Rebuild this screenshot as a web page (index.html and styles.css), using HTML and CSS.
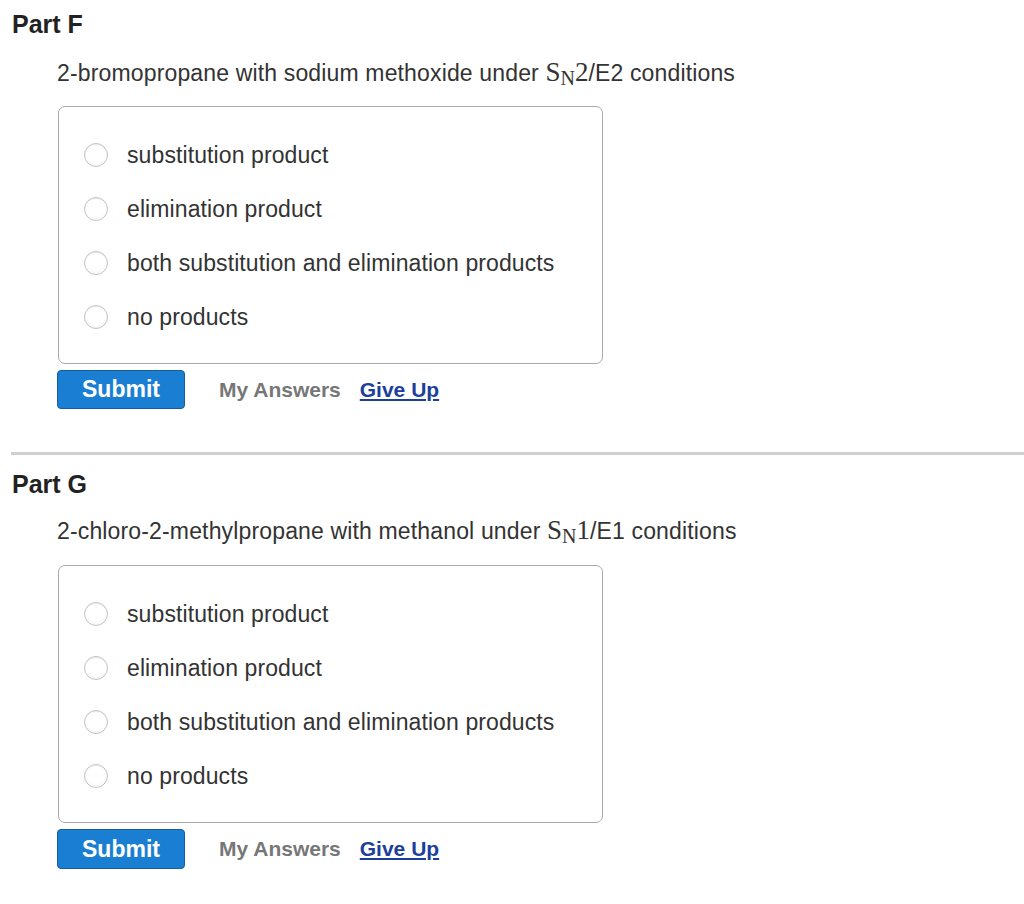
FILE: index.html
```html
<!DOCTYPE html>
<html lang="en">
<head>
    <meta charset="UTF-8">
    <meta name="viewport" content="width=1024">
    <title>Parts F and G</title>
    <link rel="stylesheet" href="styles.css">
</head>
<body>
    <div class="part">
        <h2 class="part-title">Part F</h2>
        <p class="question">2-bromopropane with sodium methoxide under <span class="math">S<sub>N</sub>2</span>/E2 conditions</p>
        <div class="choices">
            <label class="choice"><span class="radio"></span>substitution product</label>
            <label class="choice"><span class="radio"></span>elimination product</label>
            <label class="choice"><span class="radio"></span>both substitution and elimination products</label>
            <label class="choice"><span class="radio"></span>no products</label>
        </div>
        <div class="actions">
            <button class="submit">Submit</button>
            <span class="my-answers">My Answers</span>
            <a href="#" class="give-up">Give Up</a>
        </div>
    </div>

    <hr class="divider">

    <div class="part part-g">
        <h2 class="part-title">Part G</h2>
        <p class="question">2-chloro-2-methylpropane with methanol under <span class="math">S<sub>N</sub>1</span>/E1 conditions</p>
        <div class="choices">
            <label class="choice"><span class="radio"></span>substitution product</label>
            <label class="choice"><span class="radio"></span>elimination product</label>
            <label class="choice"><span class="radio"></span>both substitution and elimination products</label>
            <label class="choice"><span class="radio"></span>no products</label>
        </div>
        <div class="actions">
            <button class="submit">Submit</button>
            <span class="my-answers">My Answers</span>
            <a href="#" class="give-up">Give Up</a>
        </div>
    </div>
</body>
</html>
```

FILE: styles.css
```css
body {
    margin: 0;
    padding: 0;
    background: #fff;
    font-family: "Liberation Sans", Arial, sans-serif;
    color: #333;
}
.part {
    padding: 10px 0 0 12px;
}
.part-g {
    padding-top: 0;
}
.part-title {
    margin: 0;
    font-size: 25px;
    line-height: 28px;
    font-weight: bold;
    color: #222;
}
.question {
    margin: 20px 0 0 45px;
    font-size: 23px;
    line-height: 28px;
    letter-spacing: 0.15px;
}
.part-g .question {
    margin-top: 18px;
}
.math {
    font-family: "Liberation Serif", "Times New Roman", serif;
    font-size: 27px;
    letter-spacing: 0;
}
.math sub {
    font-size: 20px;
    vertical-align: -4px;
    line-height: 0;
}
.choices {
    margin: 19px 0 0 46px;
    width: 543px;
    padding: 21px 0 19px 0;
    border: 1px solid #aaa;
    border-radius: 7px;
}
.part-g .choices {
    margin-top: 20px;
}
.choice {
    display: flex;
    align-items: center;
    height: 54px;
    padding-left: 25px;
    font-size: 23px;
    letter-spacing: 0.1px;
}
.radio {
    width: 22px;
    height: 22px;
    border: 1px solid #c4c4c4;
    border-radius: 50%;
    background: radial-gradient(circle at 50% 35%, #fff 55%, #f0f0f0 100%);
    box-shadow: inset 0 1px 1px rgba(0, 0, 0, 0.08);
    margin-right: 19px;
    flex-shrink: 0;
}
.actions {
    display: flex;
    align-items: center;
    margin: 6px 0 0 45px;
}
.submit {
    width: 128px;
    height: 39px;
    background: #1a7fd3;
    border: 1px solid #155d9c;
    border-radius: 4px;
    color: #fff;
    font-family: "Liberation Sans", Arial, sans-serif;
    font-size: 23px;
    font-weight: bold;
    padding: 0;
    cursor: pointer;
}
.part-g .submit {
    height: 40px;
}
.my-answers {
    margin-left: 34px;
    font-size: 21px;
    font-weight: bold;
    color: #777;
}
.give-up {
    margin-left: 19px;
    font-size: 21px;
    font-weight: bold;
    color: #1c3f9c;
    text-decoration: underline;
}
.divider {
    margin: 43px 0 15px 11px;
    border: none;
    height: 3px;
    background: #cfcfcf;
}
```
